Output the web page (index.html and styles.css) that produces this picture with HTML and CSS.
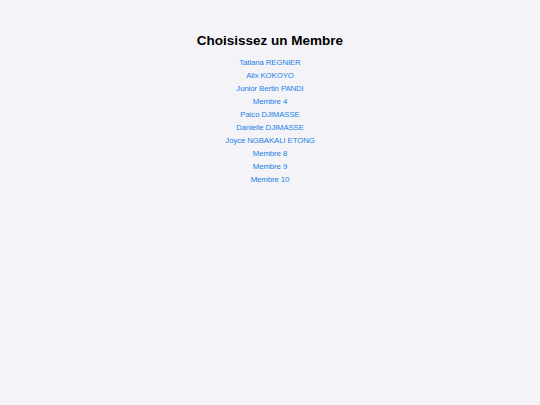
FILE: index.html
```html
<!DOCTYPE html>
<html lang="fr">
<head>
<meta charset="utf-8">
<title>Choisissez un Membre</title>
<link rel="stylesheet" href="styles.css">
</head>
<body>
<main class="page">
  <h1 class="title">Choisissez un Membre</h1>
  <ul class="members">
    <li><a href="#">Tatiana REGNIER</a></li>
    <li><a href="#">Alix KOKOYO</a></li>
    <li><a href="#">Junior Bertin PANDI</a></li>
    <li><a href="#">Membre 4</a></li>
    <li><a href="#">Paico DJIMASSE</a></li>
    <li><a href="#">Danielle DJIMASSE</a></li>
    <li><a href="#">Joyce NGBAKALI ETONG</a></li>
    <li><a href="#">Membre 8</a></li>
    <li><a href="#">Membre 9</a></li>
    <li><a href="#">Membre 10</a></li>
  </ul>
</main>
</body>
</html>
```
FILE: styles.css
```css
html, body {
  margin: 0;
  padding: 0;
  background: #f4f4f8;
  height: 100%;
}
body {
  font-family: "Liberation Sans", Arial, sans-serif;
  color: #000;
}
.page {
  display: flex;
  flex-direction: column;
  align-items: center;
  padding-top: 32px;
}
.title {
  margin: 0 0 6px;
  font-size: 13.5px;
  font-weight: bold;
  line-height: 18px;
}
.members {
  list-style: none;
  margin: 0;
  padding: 0;
  text-align: center;
}
.members li {
  font-size: 7.8px;
  letter-spacing: -0.1px;
  line-height: 13px;
}
.members a {
  color: #1a7fe6;
  text-decoration: none;
}
```
